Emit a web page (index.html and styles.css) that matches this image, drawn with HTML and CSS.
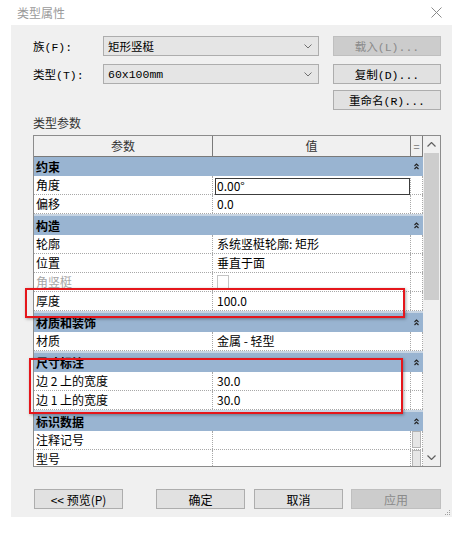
FILE: index.html
```html
<!DOCTYPE html>
<html lang="zh-CN">
<head>
    <meta charset="UTF-8">
    <meta name="viewport" content="width=device-width, initial-scale=1.0">
    <title>类型属性</title>
    <link rel="stylesheet" href="styles.css">
</head>
<body>
    <div class="dialog">
        <div class="titlebar">
            <span class="title">类型属性</span>
            <svg class="close" width="11" height="11" viewBox="0 0 11 11"><path d="M0.5 0.5 L10.5 10.5 M10.5 0.5 L0.5 10.5"/></svg>
        </div>

        <div class="panel">
            <div class="form-row">
                <label>族(F):</label>
                <div class="select">矩形竖梃<svg class="chev" width="8" height="5" viewBox="0 0 8 5"><path d="M0.5 0.5 L4 4 L7.5 0.5"/></svg></div>
                <button class="btn" disabled>载入(L)...</button>
            </div>
            <div class="form-row row-2">
                <label>类型(T):</label>
                <div class="select">60x100mm<svg class="chev" width="8" height="5" viewBox="0 0 8 5"><path d="M0.5 0.5 L4 4 L7.5 0.5"/></svg></div>
                <button class="btn">复制(D)...</button>
            </div>
            <div class="form-row row-3">
                <button class="btn">重命名(R)...</button>
            </div>

            <div class="section-label">类型参数</div>

            <div class="props">
                <div class="grid">
                    <div class="head">
                        <div class="hcell">参数</div>
                        <div class="hcell">值</div>
                        <div class="hcell">=</div>
                    </div>

                    <div class="group first"><span>约束</span><svg class="fold" width="5" height="7" viewBox="0 0 5 7"><path d="M0.5 3 L2.5 1 L4.5 3 M0.5 6 L2.5 4 L4.5 6"/></svg></div>
                    <div class="row"><div class="name">角度</div><div class="val editing">0.00°</div><div class="eq"></div></div>
                    <div class="row"><div class="name">偏移</div><div class="val">0.0</div><div class="eq"></div></div>

                    <div class="group"><span>构造</span><svg class="fold" width="5" height="7" viewBox="0 0 5 7"><path d="M0.5 3 L2.5 1 L4.5 3 M0.5 6 L2.5 4 L4.5 6"/></svg></div>
                    <div class="row"><div class="name">轮廓</div><div class="val">系统竖梃轮廓: 矩形</div><div class="eq"></div></div>
                    <div class="row"><div class="name">位置</div><div class="val">垂直于面</div><div class="eq"></div></div>
                    <div class="row disabled"><div class="name">角竖梃</div><div class="val"><span class="check"></span></div><div class="eq"></div></div>
                    <div class="row"><div class="name">厚度</div><div class="val">100.0</div><div class="eq"></div></div>

                    <div class="group"><span>材质和装饰</span><svg class="fold" width="5" height="7" viewBox="0 0 5 7"><path d="M0.5 3 L2.5 1 L4.5 3 M0.5 6 L2.5 4 L4.5 6"/></svg></div>
                    <div class="row"><div class="name">材质</div><div class="val">金属 - 轻型</div><div class="eq"></div></div>

                    <div class="group"><span>尺寸标注</span><svg class="fold" width="5" height="7" viewBox="0 0 5 7"><path d="M0.5 3 L2.5 1 L4.5 3 M0.5 6 L2.5 4 L4.5 6"/></svg></div>
                    <div class="row"><div class="name">边 2 上的宽度</div><div class="val">30.0</div><div class="eq"></div></div>
                    <div class="row"><div class="name">边 1 上的宽度</div><div class="val">30.0</div><div class="eq"></div></div>

                    <div class="group"><span>标识数据</span><svg class="fold" width="5" height="7" viewBox="0 0 5 7"><path d="M0.5 3 L2.5 1 L4.5 3 M0.5 6 L2.5 4 L4.5 6"/></svg></div>
                    <div class="row"><div class="name">注释记号</div><div class="val"></div><div class="eq"><span class="mini-btn"></span></div></div>
                    <div class="row"><div class="name">型号</div><div class="val"></div><div class="eq"><span class="mini-btn"></span></div></div>
                </div>

                <div class="vscroll">
                    <div class="arrow"><svg width="9" height="5" viewBox="0 0 9 5"><path d="M0.5 4.5 L4.5 0.5 L8.5 4.5"/></svg></div>
                    <div class="thumb"></div>
                    <div class="track"></div>
                    <div class="arrow"><svg width="9" height="5" viewBox="0 0 9 5"><path d="M0.5 0.5 L4.5 4.5 L8.5 0.5"/></svg></div>
                </div>
            </div>

            <div class="footer">
                <button class="btn preview">&lt;&lt; 预览(P)</button>
                <button class="btn ok">确定</button>
                <button class="btn cancel">取消</button>
                <button class="btn apply" disabled>应用</button>
            </div>

            <!-- resize grip -->
            <svg class="grip" width="6" height="6" viewBox="0 0 6 6">
                <rect x="4" y="0" width="1" height="1"/>
                <rect x="2" y="2" width="1" height="1"/><rect x="4" y="2" width="1" height="1"/>
                <rect x="0" y="4" width="1" height="1"/><rect x="2" y="4" width="1" height="1"/><rect x="4" y="4" width="1" height="1"/>
            </svg>
        </div>

        <!-- highlighted rows -->
        <div class="mark mark-thickness"></div>
        <div class="mark mark-dims"></div>
    </div>
</body>
</html>
```

FILE: styles.css
```css
body {
    margin: 0;
    background-color: white;
    font-family: "Noto Sans CJK SC", sans-serif;
    color: #000;
}
.dialog {
    position: relative;
    width: 463px;
    height: 540px;
}
.titlebar {
    height: 25px;
    display: flex;
    align-items: center;
    justify-content: space-between;
    padding: 0 21px 0 17px;
    box-sizing: border-box;
}
.title {
    font-size: 12px;
    line-height: 14px;
    color: #9a9a9a;
}
.close path {
    stroke: #8a8a8a;
    stroke-width: 1;
    fill: none;
}
.panel {
    position: relative;
    margin-left: 11px;
    width: 441px;
    height: 492px;
    background-color: #f0f0f0;
    padding: 11px 11px 0 22px;
    box-sizing: border-box;
}
.form-row {
    display: flex;
    align-items: center;
    height: 20px;
}
.row-2 {
    margin-top: 8px;
}
.row-3 {
    margin-top: 6px;
    justify-content: flex-end;
}
.form-row label {
    width: 70px;
    font-family: "Liberation Mono", "Noto Sans CJK SC", monospace;
    font-size: 11.5px;
}
.select {
    display: flex;
    align-items: center;
    justify-content: space-between;
    width: 216px;
    height: 20px;
    padding: 0 6px 0 4px;
    box-sizing: border-box;
    background-color: #e5e5e5;
    border: 1px solid #adadad;
    font-family: "Liberation Mono", "Noto Sans CJK SC", monospace;
    font-size: 11.5px;
}
.chev path {
    stroke: #707070;
    fill: none;
}
.btn {
    width: 108px;
    height: 20px;
    margin-left: 14px;
    padding: 0;
    background-color: #e1e1e1;
    border: 1px solid #adadad;
    font-family: "Liberation Mono", "Noto Sans CJK SC", monospace;
    font-size: 11.5px;
    color: #000;
}
.row-3 .btn {
    margin-left: 0;
}
.btn:disabled {
    background-color: #cccccc;
    border-color: #bfbfbf;
    color: #8a8a8a;
}
.section-label {
    margin-top: 6px;
    font-size: 12px;
    line-height: 14px;
    color: #333;
}

/* property grid */
.props {
    display: flex;
    width: 408px;
    height: 332px;
    margin-top: 5px;
    border: 1px solid #8c8c8c;
    box-sizing: border-box;
    background-color: white;
}
.grid {
    width: 389px;
    overflow: hidden;
    font-size: 12px;
}
.head,
.row {
    display: grid;
    grid-template-columns: 179px 198px 12px;
}
.head {
    height: 21px;
    background-color: #f0f0f0;
    border-bottom: 1px solid #7a7a7a;
    box-sizing: border-box;
}
.hcell {
    border-right: 1px solid #7a7a7a;
    text-align: center;
    line-height: 20px;
    color: #333;
}
.hcell:last-child {
    color: #777;
    font-size: 11px;
}
.group {
    display: flex;
    align-items: center;
    justify-content: space-between;
    height: 21px;
    padding: 0 4px 0 2px;
    box-sizing: border-box;
    background-color: #99b4d1;
    border-top: 2px solid #c8d5e3;
    font-weight: bold;
}
.group.first {
    height: 19px;
    border-top: none;
}
.fold path {
    stroke: #222;
    stroke-width: 1.1;
    fill: none;
}
.row {
    height: 19px;
    border-bottom: 1px dotted #a8a8a8;
    box-sizing: border-box;
    line-height: 18px;
}
.row > div {
    border-right: 1px dotted #a8a8a8;
    white-space: nowrap;
    overflow: hidden;
}
.name {
    padding-left: 2px;
}
.val {
    padding-left: 4px;
}
.val.editing {
    box-shadow: inset 0 0 0 1px #3c3c3c;
    margin: 2px 0 -1px 2px;
    padding-left: 2px;
    line-height: 16px;
}
.disabled .name {
    color: #a6a6a6;
}
.check {
    display: inline-block;
    width: 10px;
    height: 12px;
    margin-top: 2px;
    border: 1px solid #c4c4c4;
    vertical-align: top;
}
.mini-btn {
    display: block;
    height: 17px;
    margin: 0 1px;
    background-color: #e6e6e6;
    border: 1px solid #b4b4b4;
    box-sizing: border-box;
}
.vscroll {
    display: flex;
    flex-direction: column;
    width: 17px;
    background-color: #f0f0f0;
}
.arrow {
    height: 17px;
    display: flex;
    align-items: center;
    justify-content: center;
}
.arrow path {
    stroke: #606060;
    stroke-width: 1.2;
    fill: none;
}
.thumb {
    height: 147px;
    margin: 0 1px;
    background-color: #cdcdcd;
}
.track {
    flex: 1;
}

/* dialog buttons */
.footer {
    display: flex;
    margin-top: 22px;
}
.footer .btn {
    width: 89px;
    font-family: "Noto Sans CJK SC", sans-serif;
    font-size: 12px;
}
.footer .preview {
    margin-left: 1px;
}
.footer .ok {
    margin-left: 33px;
}
.footer .cancel {
    margin-left: 9px;
}
.footer .apply {
    width: 90px;
    margin-left: 8px;
}
.grip {
    position: absolute;
    right: 1px;
    bottom: 1px;
    fill: #a0a0a0;
}

/* red annotation frames */
.mark {
    position: absolute;
    border: 2px solid #e5161b;
    box-shadow: 1px 1px 3px rgba(0, 0, 0, 0.35);
    box-sizing: border-box;
}
.mark-thickness {
    left: 25px;
    top: 288px;
    width: 380px;
    height: 30px;
}
.mark-dims {
    left: 29px;
    top: 358px;
    width: 374px;
    height: 56px;
}
```
